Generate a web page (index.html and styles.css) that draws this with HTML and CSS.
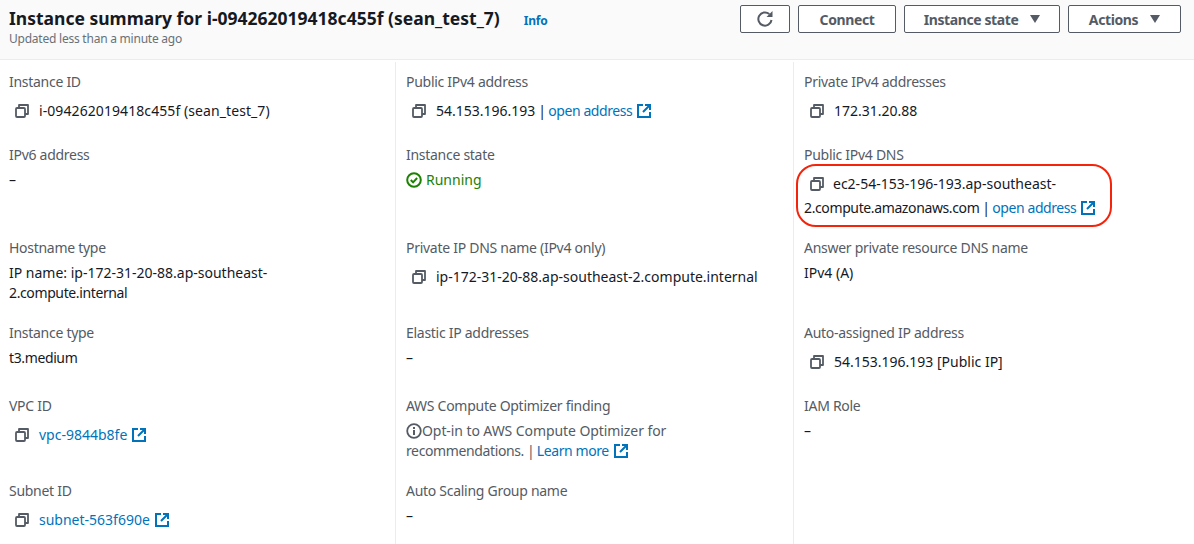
FILE: index.html
```html
<!DOCTYPE html>
<html lang="en">
<head>
  <meta charset="UTF-8" />
  <title>Instance summary</title>
  <link rel="stylesheet" href="styles.css">
</head>
<body>
  <svg class="sprite" width="0" height="0">
    <symbol id="copy" viewBox="0 0 14 14">
      <path d="M4 4V1h9v9h-3" fill="none" stroke="#545b64" stroke-width="1.8" stroke-linejoin="round"/>
      <rect x="1" y="4" width="9" height="9" rx="1" fill="none" stroke="#545b64" stroke-width="1.8"/>
    </symbol>
    <symbol id="ext" viewBox="0 0 14 14">
      <path d="M6 1H1v12h12V8" fill="none" stroke="#0073bb" stroke-width="2"/>
      <path d="M8 1h5v5M13 1L6 8" fill="none" stroke="#0073bb" stroke-width="2"/>
    </symbol>
  </svg>

  <header class="head">
    <div class="head-text">
      <div class="title-row">
        <h1>Instance summary for i-094262019418c455f (sean_test_7)</h1>
        <a class="info" href="#">Info</a>
      </div>
      <div class="updated">Updated less than a minute ago</div>
    </div>
    <div class="actions">
      <button class="btn btn-refresh" aria-label="Refresh">
        <svg width="18" height="18" viewBox="0 0 18 18"><path d="M15.5 10a6.6 6.6 0 1 1-2.2-5.9" fill="none" stroke="#545b64" stroke-width="2"/><path d="M10.5 7h6V1z" fill="#545b64"/></svg>
      </button>
      <button class="btn btn-connect">Connect</button>
      <button class="btn btn-state">Instance state<span class="caret"></span></button>
      <button class="btn btn-actions">Actions<span class="caret"></span></button>
    </div>
  </header>

  <main class="grid">
    <div class="cell">
      <div class="label">Instance ID</div>
      <div class="copy-value"><svg class="ico-copy"><use href="#copy"/></svg><span class="loose">i-094262019418c455f (sean_test_7)</span></div>
    </div>
    <div class="cell">
      <div class="label">Public IPv4 address</div>
      <div class="copy-value"><svg class="ico-copy"><use href="#copy"/></svg>54.153.196.193<span class="pipe"> | </span><a class="after-pipe" href="#">open address<svg class="ico-ext"><use href="#ext"/></svg></a></div>
    </div>
    <div class="cell">
      <div class="label">Private IPv4 addresses</div>
      <div class="copy-value"><svg class="ico-copy"><use href="#copy"/></svg>172.31.20.88</div>
    </div>

    <div class="cell">
      <div class="label">IPv6 address</div>
      <div class="value">–</div>
    </div>
    <div class="cell">
      <div class="label">Instance state</div>
      <div class="value running">
        <svg class="ico-ok" viewBox="0 0 16 16"><circle cx="8" cy="8" r="6.8" fill="none" stroke="#1d8102" stroke-width="2"/><path d="M4.8 8l2.3 2.4 4-4.4" fill="none" stroke="#1d8102" stroke-width="2"/></svg>Running
      </div>
    </div>
    <div class="cell">
      <div class="label">Public IPv4 DNS</div>
      <div class="copy-value wrapped"><svg class="ico-copy"><use href="#copy"/></svg>ec2-54-153-196-193.ap-southeast-<span class="tight">2.compute.amazonaws.com</span><span class="pipe"> | </span><a class="after-pipe" href="#">open address<svg class="ico-ext"><use href="#ext"/></svg></a></div>
      <div class="highlight"></div>
    </div>

    <div class="cell">
      <div class="label">Hostname type</div>
      <div class="value">IP name: ip-172-31-20-88.ap-southeast-<span class="tight">2.compute.internal</span></div>
    </div>
    <div class="cell">
      <div class="label">Private IP DNS name (IPv4 only)</div>
      <div class="copy-value"><svg class="ico-copy"><use href="#copy"/></svg>ip-172-31-20-88.ap-southeast-2.compute.internal</div>
    </div>
    <div class="cell">
      <div class="label">Answer private resource DNS name</div>
      <div class="value">IPv4 (A)</div>
    </div>

    <div class="cell">
      <div class="label">Instance type</div>
      <div class="value"><span class="tight">t3.medium</span></div>
    </div>
    <div class="cell">
      <div class="label">Elastic IP addresses</div>
      <div class="value">–</div>
    </div>
    <div class="cell">
      <div class="label">Auto-assigned IP address</div>
      <div class="copy-value"><svg class="ico-copy"><use href="#copy"/></svg>54.153.196.193 [Public IP]</div>
    </div>

    <div class="cell">
      <div class="label">VPC ID</div>
      <div class="copy-value"><svg class="ico-copy"><use href="#copy"/></svg><a class="id-link" href="#">vpc-9844b8fe<svg class="ico-ext"><use href="#ext"/></svg></a></div>
    </div>
    <div class="cell">
      <div class="label">AWS Compute Optimizer finding</div>
      <div class="value muted">
        <svg class="ico-info" viewBox="0 0 16 16"><circle cx="8" cy="8" r="6.8" fill="none" stroke="#545b64" stroke-width="1.8"/><path d="M8 7v5M8 4v2" fill="none" stroke="#545b64" stroke-width="2"/></svg><span class="slight">Opt-in to AWS Compute Optimizer for</span> <span class="tight">recommendations.</span><span class="pipe"> | </span><a class="after-pipe" href="#">Learn more<svg class="ico-ext"><use href="#ext"/></svg></a>
      </div>
    </div>
    <div class="cell">
      <div class="label">IAM Role</div>
      <div class="value">–</div>
    </div>

    <div class="cell">
      <div class="label">Subnet ID</div>
      <div class="copy-value"><svg class="ico-copy"><use href="#copy"/></svg><a class="id-link" href="#">subnet-563f690e<svg class="ico-ext"><use href="#ext"/></svg></a></div>
    </div>
    <div class="cell">
      <div class="label">Auto Scaling Group name</div>
      <div class="value">–</div>
    </div>
    <div class="cell"></div>
  </main>
</body>
</html>
```

FILE: styles.css
```css
html, body {
  margin: 0;
  padding: 0;
  height: 544px;
  overflow: hidden;
}

body {
  background: #fff;
  color: #16191f;
  font-family: "Noto Sans", "Open Sans", sans-serif;
  font-size: 14px;
  line-height: 20px;
}

a {
  color: #0073bb;
  text-decoration: none;
}

.sprite {
  position: absolute;
}

.head {
  display: flex;
  justify-content: space-between;
  height: 54px;
  padding: 5px 13px 0 9px;
  background: #fafafa;
  border-bottom: 1px solid #eaeded;
}

.title-row {
  display: flex;
  align-items: baseline;
  gap: 24px;
}

h1 {
  margin: 0;
  font-size: 17.5px;
  line-height: 26px;
  font-weight: 700;
}

.info {
  font-size: 12px;
  font-weight: 700;
  letter-spacing: -0.2px;
}

.updated {
  font-size: 12px;
  line-height: 16px;
  color: #687078;
  letter-spacing: -0.23px;
}

.actions {
  display: flex;
  gap: 8px;
  align-items: flex-start;
}

.btn {
  display: flex;
  align-items: center;
  justify-content: center;
  height: 28px;
  padding: 0;
  border: 1px solid #545b64;
  border-radius: 2px;
  background: #fff;
  color: #545b64;
  font-family: inherit;
  font-size: 14px;
  font-weight: 700;
  letter-spacing: -0.4px;
}

.btn-refresh { width: 50px; }
.btn-connect { width: 98px; }
.btn-state { width: 156px; }
.btn-actions { width: 113px; }

.caret {
  width: 0;
  height: 0;
  margin-left: 12px;
  border-left: 5px solid transparent;
  border-right: 5px solid transparent;
  border-top: 8px solid #545b64;
}

.grid {
  display: grid;
  grid-template-columns: 395px 398px 1fr;
  margin-top: 2px;
}

.cell {
  position: relative;
  padding: 10px 12px 20px 10px;
  border-left: 1px solid #eaeded;
}

.cell:nth-child(3n+1) {
  padding-left: 9px;
  border-left: none;
}

.cell:nth-child(n+4) {
  padding-top: 0;
}

.label {
  color: #545b64;
  letter-spacing: -0.28px;
}

.value {
  margin-top: 5px;
}

.copy-value {
  margin-top: 7px;
  padding-bottom: 2px;
  line-height: 24px;
}

.copy-value.wrapped {
  padding-bottom: 0;
  margin-bottom: -2px;
}

.copy-value.wrapped .ico-copy {
  margin-right: 9px;
}

.tight {
  letter-spacing: -0.38px;
}

.slight {
  letter-spacing: -0.08px;
}

.loose {
  letter-spacing: 0.08px;
}

.pipe {
  letter-spacing: -0.7px;
}

.after-pipe {
  letter-spacing: -0.42px;
}

.ico-copy {
  width: 14px;
  height: 14px;
  margin: 0 10px 0 6px;
  vertical-align: -2px;
}

.ico-ext {
  width: 14px;
  height: 14px;
  margin-left: 5px;
  vertical-align: -2px;
}

.running {
  color: #1d8102;
}

.ico-ok,
.ico-info {
  width: 16px;
  height: 16px;
  vertical-align: -3px;
}

.ico-ok {
  margin-right: 4px;
}

.muted {
  color: #545b64;
}

.highlight {
  position: absolute;
  left: 2px;
  top: 19px;
  width: 312px;
  height: 59px;
  border: 2.5px solid #f5230a;
  border-radius: 20px;
}
```
